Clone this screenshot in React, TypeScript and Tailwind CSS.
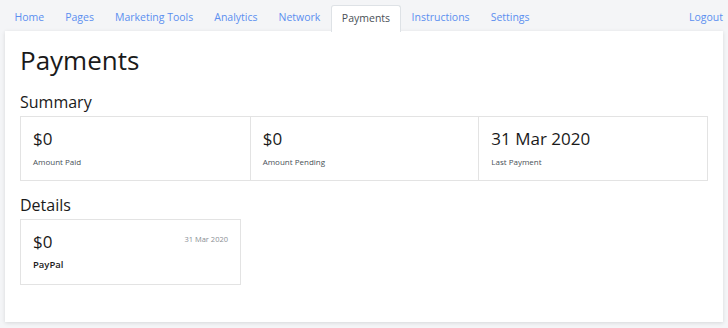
const tabs = ['Home', 'Pages', 'Marketing Tools', 'Analytics', 'Network', 'Payments', 'Instructions', 'Settings']

const summary = [
  { value: '$0', label: 'Amount Paid' },
  { value: '$0', label: 'Amount Pending' },
  { value: '31 Mar 2020', label: 'Last Payment' },
]

export default function App() {
  return (
    <div
      className="h-[328px] w-[728px] overflow-hidden bg-[#f4f5f7]"
      style={{ fontFamily: '"Open Sans", "Liberation Sans", sans-serif' }}
    >
      {/* Nav */}
      <nav className="flex h-[31px] items-end justify-between pl-[4px] pr-[5px]">
        <ul className="flex">
          {tabs.map((t) =>
            t === 'Payments' ? (
              <li
                key={t}
                className="relative z-10 -mb-px flex h-[27px] items-center rounded-t-[3px] border border-b-0 border-[#dee2e6] bg-white px-[10px] text-[10.5px] text-[#495057]"
              >
                {t}
              </li>
            ) : (
              <li key={t} className="flex h-[26px] items-center px-[10.5px] text-[10.5px] text-[#5b8ff0]">
                {t}
              </li>
            ),
          )}
        </ul>
        <a className="flex h-[26px] items-center text-[10.5px] text-[#5b8ff0]">Logout</a>
      </nav>

      {/* Content card */}
      <main className="mx-[5px] h-[291px] bg-white px-[15px] pt-[13px] shadow-[0_1px_4px_rgba(0,0,0,0.12)]">
        <h1 className="text-[26px] leading-[32px] text-[#1a1a1a]">Payments</h1>

        <h2 className="mt-[16px] text-[16px] leading-[20px] text-[#1a1a1a]">Summary</h2>
        <div className="mt-[4px] grid h-[65px] grid-cols-3 border border-[#e3e3e3]">
          {summary.map((s, i) => (
            <div key={s.label} className={`px-[12px] pt-[11px] ${i > 0 ? 'border-l border-[#e3e3e3]' : ''}`}>
              <div className="text-[17px] leading-[22px] text-[#1a1a1a]">{s.value}</div>
              <div className="mt-[6px] text-[8px] text-[#495057]">{s.label}</div>
            </div>
          ))}
        </div>

        <h2 className="mt-[14px] text-[16px] leading-[20px] text-[#1a1a1a]">Details</h2>
        <div className="mt-[4px] h-[66px] w-[221px] border border-[#e3e3e3] px-[12px] pt-[11px]">
          <div className="flex items-start justify-between">
            <span className="text-[17px] leading-[22px] text-[#1a1a1a]">$0</span>
            <span className="mt-[3px] text-[7.5px] text-[#8a8f95]">31 Mar 2020</span>
          </div>
          <div className="mt-[5px] text-[9.5px] font-semibold text-[#1a1a1a]">PayPal</div>
        </div>
      </main>
    </div>
  )
}
